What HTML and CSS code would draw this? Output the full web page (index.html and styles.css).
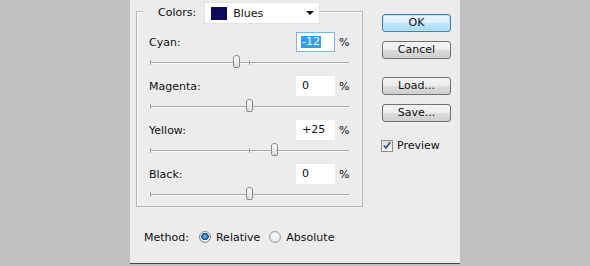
FILE: index.html
```html
<!DOCTYPE html>
<html>
<head>
<meta charset="utf-8">
<link rel="stylesheet" href="styles.css">
</head>
<body>
<div class="panel">
  <div class="left">
    <div class="group">
      <div class="group-head">
        <span class="head-label">Colors:</span>
        <div class="select">
          <span class="swatch"></span>
          <span class="select-text">Blues</span>
          <svg class="arrow" width="8" height="4" viewBox="0 0 8 4"><path d="M0 0H8L4 4Z" fill="#111"/></svg>
        </div>
      </div>

      <div class="row">
        <span class="row-label">Cyan:</span>
        <span class="field focus"><span class="sel">-12</span></span>
        <span class="pct">%</span>
      </div>
      <div class="slider">
        <span class="track"></span>
        <span class="tick tick-start"></span>
        <span class="tick tick-mid"></span>
        <span class="thumb" style="left:83px"></span>
      </div>

      <div class="row">
        <span class="row-label">Magenta:</span>
        <span class="field">0</span>
        <span class="pct">%</span>
      </div>
      <div class="slider">
        <span class="track"></span>
        <span class="tick tick-start"></span>
        <span class="thumb" style="left:96px"></span>
      </div>

      <div class="row">
        <span class="row-label">Yellow:</span>
        <span class="field">+25</span>
        <span class="pct">%</span>
      </div>
      <div class="slider">
        <span class="track"></span>
        <span class="tick tick-start"></span>
        <span class="tick tick-mid"></span>
        <span class="thumb" style="left:121px"></span>
      </div>

      <div class="row">
        <span class="row-label">Black:</span>
        <span class="field">0</span>
        <span class="pct">%</span>
      </div>
      <div class="slider last">
        <span class="track"></span>
        <span class="tick tick-start"></span>
        <span class="thumb" style="left:96px"></span>
      </div>
    </div>

    <div class="method">
      <span class="method-label">Method:</span>
      <span class="radio on"></span>
      <span class="radio-text">Relative</span>
      <span class="radio off"></span>
      <span class="radio-text">Absolute</span>
    </div>
  </div>

  <div class="right">
    <div class="btn default">OK</div>
    <div class="btn btn-cancel">Cancel</div>
    <div class="btn btn-load">Load...</div>
    <div class="btn btn-save">Save...</div>
    <div class="check-row">
      <span class="checkbox">
        <svg width="11" height="11" viewBox="0 0 11 11"><path d="M2 5.5L4.3 8.3L9 2" fill="none" stroke="#35498a" stroke-width="1.8"/></svg>
      </span>
      <span class="check-text">Preview</span>
    </div>
  </div>
</div>
</body>
</html>
```

FILE: styles.css
```css
html, body {
  margin: 0;
  padding: 0;
}
body {
  width: 590px;
  height: 266px;
  background: #c0c0c0;
  font-family: "DejaVu Sans", Verdana, sans-serif;
  font-size: 11px;
  color: #111;
  overflow: hidden;
}
.panel {
  margin-left: 130px;
  width: 330px;
  height: 264px;
  background: #ececec;
  border-bottom: 1px solid #4d3d4d;
  display: flex;
  padding-left: 6px;
  box-sizing: border-box;
}
.left {
  width: 227px;
  display: flex;
  flex-direction: column;
}
.group {
  margin-top: 11px;
  border: 1px solid #b7b7b7;
  box-shadow: inset 1px 1px 0 #fbfbfb;
  padding: 0 13px 0 12px;
  display: flex;
  flex-direction: column;
}
.group-head {
  align-self: flex-start;
  margin-top: -10px;
  margin-left: -6px;
  padding-left: 15px;
  background: #ececec;
  display: flex;
  align-items: center;
  gap: 8px;
  height: 22px;
}
.head-label {
  line-height: 22px;
}
.select {
  width: 116px;
  height: 22px;
  box-sizing: border-box;
  background: #fff;
  border: 1px solid #e2e2e2;
  display: flex;
  align-items: center;
  padding-left: 6px;
}
.swatch {
  width: 16px;
  height: 13px;
  background: #0b0b5e;
}
.select-text {
  margin-left: 6px;
  flex: 1;
}
.arrow {
  margin-right: 5px;
}
.row {
  display: flex;
  align-items: center;
  height: 20px;
  margin-top: 2px;
}
.group-head + .row {
  margin-top: 8px;
}
.row-label {
  flex: 1;
}
.field {
  width: 39px;
  height: 20px;
  box-sizing: border-box;
  background: #fff;
  border: 1px solid #fff;
  padding-left: 5px;
  line-height: 18px;
}
.field.focus {
  border-color: #7fb4e8;
  padding-left: 4px;
  display: flex;
  align-items: center;
}
.sel {
  display: inline-block;
  background: #3399ff;
  color: #fff;
  line-height: 12px;
  padding: 0 2px 0 1px;
  width: 20px;
  box-sizing: border-box;
}
.pct {
  margin-left: 4px;
  width: 10px;
}
.slider {
  position: relative;
  height: 22px;
}
.track {
  display: block;
  margin: 10px 0 0 1px;
  height: 1px;
  background: #a8a8a8;
  box-shadow: 0 1px 0 #fafafa;
}
.tick {
  position: absolute;
  width: 1px;
  height: 5px;
  top: 8px;
  background: #a0a0a0;
}
.tick-start {
  left: 1px;
}
.tick-mid {
  left: 100px;
}
.thumb {
  position: absolute;
  top: 3px;
  width: 7px;
  height: 13px;
  box-sizing: border-box;
  margin-left: 1px;
  border: 1px solid #8c8c8c;
  border-radius: 3px 3px 2px 2px;
  background: linear-gradient(#fdfdfd, #dcdcdc);
}
.method {
  margin: 22px 0 0 8px;
  display: flex;
  align-items: center;
  height: 16px;
}
.method-label {
  margin-right: 10px;
}
.radio {
  width: 12px;
  height: 12px;
  box-sizing: border-box;
  border-radius: 50%;
  border: 1px solid #9a9a9a;
  background: radial-gradient(circle at 50% 40%, #fdfdfd, #dedede);
}
.radio.on {
  background: radial-gradient(circle at 50% 45%, #7ec8f0 0, #1f74b3 2.5px, #0d4f8a 3.5px, #f2f2f2 4px, #e0e0e0 6px);
  border-color: #8a8a8a;
}
.radio-text {
  margin-left: 5px;
  margin-right: 9px;
}
.right {
  margin-left: 19px;
  width: 69px;
  display: flex;
  flex-direction: column;
}
.btn {
  height: 18px;
  box-sizing: border-box;
  border: 1px solid #707070;
  border-radius: 3px;
  background: linear-gradient(#f4f4f4 0, #ebebeb 50%, #dddddd 50%, #cfcfcf 100%);
  text-align: center;
  line-height: 16px;
  margin-top: 9px;
}
.btn.default {
  margin-top: 14px;
  border-color: #3c7fb1;
  background: linear-gradient(#e9f5fc 0, #dbeffb 50%, #bee6fd 50%, #a7d9f5 100%);
  box-shadow: inset 0 0 0 1px #bfe3f7;
}
.btn-load {
  margin-top: 18px;
}
.check-row {
  margin-top: 17px;
  display: flex;
  align-items: center;
  height: 13px;
}
.checkbox {
  width: 12px;
  height: 12px;
  margin-left: -1px;
  box-sizing: border-box;
  border: 1px solid #8e8f8f;
  background: linear-gradient(#dcdcdc, #f6f6f6);
  display: flex;
  align-items: center;
  justify-content: center;
}
.check-text {
  margin-left: 4px;
}
```
